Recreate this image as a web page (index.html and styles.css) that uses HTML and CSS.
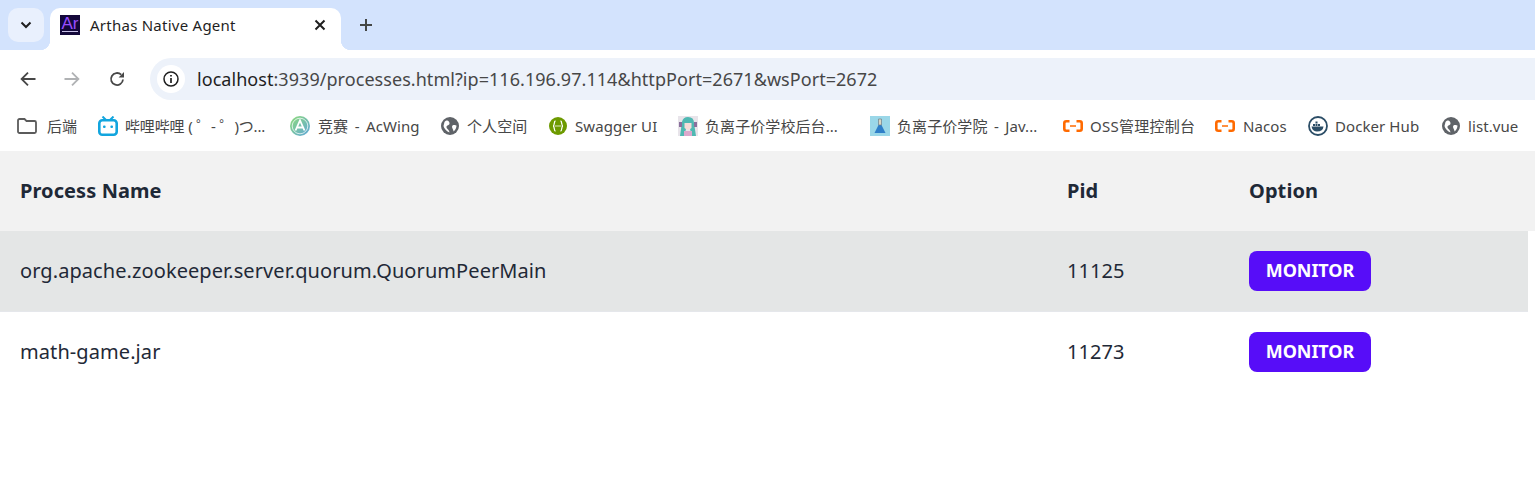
FILE: index.html
```html
<!DOCTYPE html>
<html lang="en">
<head>
<meta charset="utf-8">
<title>Arthas Native Agent</title>
<link rel="stylesheet" href="styles.css">
</head>
<body>
<div class="browser">
  <div class="tabstrip">
    <div class="tab-menu">
      <svg width="12" height="8" viewBox="0 0 12 8"><path d="M1.500 1.500 6 6 10.500 1.500" fill="none" stroke="#1f1f1f" stroke-width="2"/></svg>
    </div>
    <div class="tab">
      <svg class="tab-icon" width="20" height="20" viewBox="0 0 20 20"><rect width="20" height="20" fill="#14083a"/><text x="1.500" y="13.500" class="ar-text">Ar</text><rect x="2" y="16" width="16" height="1" fill="#c8c0e8"/></svg>
      <span class="tab-title">Arthas Native Agent</span>
      <svg class="tab-close" width="12" height="12" viewBox="0 0 12 12"><path d="M1.500 1.500 10.500 10.500M10.500 1.500 1.500 10.500" stroke="#1f1f1f" stroke-width="2"/></svg>
    </div>
    <svg class="new-tab" width="14" height="14" viewBox="0 0 14 14"><path d="M7 1V13M1 7H13" stroke="#444746" stroke-width="2"/></svg>
  </div>
  <div class="toolbar">
    <svg class="nav-btn" width="16" height="16" viewBox="0 0 16 16"><path d="M15.500 8H2M8 1.600 1.600 8 8 14.400" fill="none" stroke="#474747" stroke-width="1.800"/></svg>
    <svg class="nav-btn" width="16" height="16" viewBox="0 0 16 16"><path d="M.5 8H14M8 1.600 14.400 8 8 14.400" fill="none" stroke="#b0b2b4" stroke-width="1.800"/></svg>
    <svg class="nav-btn" width="16" height="16" viewBox="0 0 16 16"><path d="M14 8.500A6 6 0 1 1 12.200 3.700" fill="none" stroke="#474747" stroke-width="1.800"/><path d="M15 1V6.400H9.600Z" fill="#474747"/></svg>
    <div class="omnibox">
      <div class="info-chip">
        <svg width="16" height="16" viewBox="0 0 16 16"><circle cx="8" cy="8" r="7" fill="none" stroke="#1f1f1f" stroke-width="1.500"/><path d="M8 7V12M8 4V5.600" stroke="#1f1f1f" stroke-width="1.700"/></svg>
      </div>
      <span class="url"><span class="host">localhost</span>:3939/processes.html?ip=116.196.97.114&amp;httpPort=2671&amp;wsPort=2672</span>
    </div>
  </div>
  <div class="bookmarks">
    <div class="bm b1"><svg width="20" height="16" viewBox="0 0 20 16"><path d="M1 2.500A1.500 1.500 0 0 1 2.500 1H7.500L9.500 3H17.500A1.500 1.500 0 0 1 19 4.500V13.500A1.500 1.500 0 0 1 17.500 15H2.500A1.500 1.500 0 0 1 1 13.500Z" fill="none" stroke="#5b5b5b" stroke-width="1.800"/></svg><span>后端</span></div>
    <div class="bm b2"><svg width="20" height="20" viewBox="0 0 20 20"><path d="M4.500 .5 8 4M15.500 .5 12 4" stroke="#12a5de" stroke-width="2"/><rect x="1.300" y="4.300" width="17.400" height="14.400" rx="3" fill="#fff" stroke="#12a5de" stroke-width="2.600"/><rect x="5" y="9.500" width="2.600" height="2.600" rx="1" fill="#12a5de"/><rect x="12.400" y="9.500" width="2.600" height="2.600" rx="1" fill="#12a5de"/></svg><span class="t-bili">哔哩哔哩 ( ゜- ゜)つ...</span></div>
    <div class="bm b3"><svg width="20" height="20" viewBox="0 0 20 20"><defs><linearGradient id="acw" x1="0" y1="0" x2="1" y2="1"><stop offset="0" stop-color="#8fdc78"/><stop offset="1" stop-color="#5fa6dc"/></linearGradient></defs><circle cx="10" cy="10" r="10" fill="url(#acw)"/><circle cx="10" cy="10" r="7.800" fill="none" stroke="#fff" stroke-width=".9" opacity=".8"/><path d="M5.500 14.500 10 4.500 14.500 14.500M7 11.500H13" fill="none" stroke="#fff" stroke-width="1.800"/></svg><span class="t-dash">竞赛 - AcWing</span></div>
    <div class="bm b4"><svg width="18" height="18" viewBox="0 0 18 18"><circle cx="9" cy="9" r="9" fill="#5f6368"/><path d="M3.500 5C6 2 8.500 4 8.500 6.500 8.500 8.500 5.500 8 5.500 10 5.500 12 8 12 8.500 15.500 5 14 3 11 2.500 9ZM11.500 8.500C13 7.500 15 8.500 15.500 8.500 15.500 10.500 14.500 13 12.500 14.500 12.500 12 10 10.500 11.500 8.500Z" fill="#fff"/></svg><span>个人空间</span></div>
    <div class="bm b5"><svg width="18" height="18" viewBox="0 0 18 18"><circle cx="9" cy="9" r="9" fill="#6d9a00"/><path d="M6.500 4C4.500 4 6 9 4 9 6 9 4.500 14 6.500 14M11.500 4C13.500 4 12 9 14 9 12 9 13.500 14 11.500 14" fill="none" stroke="#fff" stroke-width="1.300"/><path d="M6.500 9H11.500" stroke="#fff" stroke-width="1.300" stroke-dasharray="1 1"/></svg><span>Swagger UI</span></div>
    <div class="bm b6"><svg width="20" height="20" viewBox="0 0 20 20"><rect width="20" height="20" fill="#e8e4ea"/><path d="M2 20 4 6Q5 1 10 1 16 1 16 7L18 20H14L12 13H8L6 20Z" fill="#4fb8b2"/><path d="M6.500 7H13.500V12Q10 15.500 6.500 12Z" fill="#f6dcd8"/><rect x="1" y="6" width="3" height="5" fill="#8a6f9c"/><rect x="16" y="6" width="3" height="5" fill="#8a6f9c"/><path d="M6 15H14V20H6Z" fill="#dba8cc"/></svg><span>负离子价学校后台...</span></div>
    <div class="bm b7"><svg width="20" height="20" viewBox="0 0 20 20"><rect width="20" height="20" fill="#9ad7e8"/><path d="M8.500 9H11.500L15.500 17H4.500Z" fill="#2f7fc8"/><path d="M8.500 3H11.500V9H8.500Z" fill="#d9d6c4" stroke="#6f7f88" stroke-width=".7"/></svg><span class="t-dash">负离子价学院 - Jav...</span></div>
    <div class="bm b8"><svg width="20" height="12" viewBox="0 0 20 12"><path d="M6.500 1.300H3.300Q1.300 1.300 1.300 3.300V8.700Q1.300 10.700 3.300 10.700H6.500M13.500 1.300H16.700Q18.700 1.300 18.700 3.300V8.700Q18.700 10.700 16.700 10.700H13.500" fill="none" stroke="#ff6a00" stroke-width="2.600"/><path d="M7 6H13" stroke="#ff6a00" stroke-width="1.500"/></svg><span class="t-oss">OSS管理控制台</span></div>
    <div class="bm b9"><svg width="20" height="12" viewBox="0 0 20 12"><path d="M6.500 1.300H3.300Q1.300 1.300 1.300 3.300V8.700Q1.300 10.700 3.300 10.700H6.500M13.500 1.300H16.700Q18.700 1.300 18.700 3.300V8.700Q18.700 10.700 16.700 10.700H13.500" fill="none" stroke="#ff6a00" stroke-width="2.600"/><path d="M7 6H13" stroke="#ff6a00" stroke-width="1.500"/></svg><span>Nacos</span></div>
    <div class="bm b10"><svg width="20" height="20" viewBox="0 0 20 20"><circle cx="10" cy="10" r="9" fill="#fff" stroke="#2b4d66" stroke-width="1.800"/><path d="M3.500 10.500H15.500Q15 15.500 9 15.500 4.500 15.500 3.500 10.500Z" fill="#2b4d66"/><path d="M5 8H7V10H5ZM7.500 8H9.500V10H7.500ZM10 8H12V10H10ZM7.500 5.500H9.500V7.500H7.500Z" fill="#2b4d66"/></svg><span>Docker Hub</span></div>
    <div class="bm b11"><svg width="18" height="18" viewBox="0 0 18 18"><circle cx="9" cy="9" r="9" fill="#5f6368"/><path d="M3.500 5C6 2 8.500 4 8.500 6.500 8.500 8.500 5.500 8 5.500 10 5.500 12 8 12 8.500 15.500 5 14 3 11 2.500 9ZM11.500 8.500C13 7.500 15 8.500 15.500 8.500 15.500 10.500 14.500 13 12.500 14.500 12.500 12 10 10.500 11.500 8.500Z" fill="#fff"/></svg><span>list.vue</span></div>
  </div>
</div>
<table class="proc-table">
  <thead>
    <tr><th class="c-name">Process Name</th><th class="c-pid">Pid</th><th class="c-opt">Option</th></tr>
  </thead>
  <tbody>
    <tr class="active"><td>org.apache.zookeeper.server.quorum.QuorumPeerMain</td><td>11125</td><td><button class="monitor">MONITOR</button></td></tr>
    <tr><td>math-game.jar</td><td>11273</td><td><button class="monitor">MONITOR</button></td></tr>
  </tbody>
</table>
</body>
</html>
```
FILE: styles.css
```css
* { box-sizing: border-box; }
html, body { margin: 0; padding: 0; background: #fff; overflow: hidden; }
body { width: 1535px; height: 477px; font-family: "Noto Sans", "Noto Sans CJK SC", sans-serif; color: #1f2937; }

.tabstrip { height: 50px; background: #d3e3fd; display: flex; align-items: flex-end; padding-left: 8px; }
.tab-menu { width: 36px; height: 34px; margin-bottom: 8px; background: #e9f0fd; border-radius: 10px; display: flex; align-items: center; justify-content: center; }
.tab { position: relative; width: 291px; height: 42px; margin-left: 6px; background: #fff; border-radius: 10px 10px 0 0; display: flex; align-items: center; padding: 0 15px 8px 10px; }
.tab::before, .tab::after { content: ""; position: absolute; bottom: 0; width: 10px; height: 10px; }
.tab::before { left: -10px; background: radial-gradient(circle at 0 0, transparent 10px, #fff 10.5px); }
.tab::after { right: -10px; background: radial-gradient(circle at 100% 0, transparent 10px, #fff 10.5px); }
.tab-icon { flex: none; }
.ar-text { font: 17px "Liberation Sans", sans-serif; fill: #9a4dff; }
.tab-title { flex: 1; margin-left: 10px; font: 15px "Noto Sans", sans-serif; letter-spacing: .25px; color: #1f1f1f; }
.new-tab { margin: 0 0 18px 18px; }

.toolbar { height: 50px; background: #fff; border-radius: 10px 0 0 0; display: flex; align-items: flex-start; padding: 8px 0 0 0; }
.nav-btn { flex: none; margin: 13px 0 0 20px; width: 16px; }
.nav-btn + .nav-btn { margin-left: 28px; }
.nav-btn + .nav-btn + .nav-btn { margin-left: 29px; }
.omnibox { flex: 1; height: 42px; margin-left: 25px; background: #edf2fa; border-radius: 21px 0 0 21px; display: flex; align-items: center; padding-left: 7px; }
.info-chip { width: 28px; height: 28px; border-radius: 50%; background: #fff; display: flex; align-items: center; justify-content: center; }
.url { margin-left: 12px; font-size: 18px; letter-spacing: .05px; color: #474747; white-space: nowrap; }
.host { color: #1f1f1f; }

.bookmarks { height: 51px; display: flex; align-items: center; padding-left: 17px; font-size: 15px; letter-spacing: .08px; color: #474747; white-space: nowrap; }
.bm { display: flex; align-items: center; gap: 8px; flex: none; }
.bm svg { flex: none; }
.b1 { gap: 10px; width: 81px; }
.b2 { gap: 7px; width: 192px; }
.b3 { width: 151px; }
.b4 { width: 108px; }
.b5 { width: 129px; }
.b6 { gap: 7px; width: 192px; }
.b7 { gap: 7px; width: 193px; }
.b8 { gap: 7px; width: 152px; }
.b9 { width: 93px; }
.b10 { gap: 7px; width: 134px; }
.t-bili { letter-spacing: -.15px; }
.t-dash { word-spacing: 2.5px; }
.t-oss { letter-spacing: .25px; }

.proc-table { width: 1528px; border-collapse: separate; border-spacing: 0; table-layout: fixed; font-size: 20px; letter-spacing: .08px; color: #1f2937; }
.proc-table th { height: 80px; padding: 0 20px 2px; text-align: left; background: #f2f2f2; font-weight: 700; }
.proc-table th:last-child { box-shadow: 7px 0 0 #f2f2f2; }
.proc-table td { height: 81px; padding: 0 20px 2px; border-bottom: 1px solid #e5e7eb; }
.proc-table tbody tr:last-child td { height: 80px; border-bottom: 0; }
.c-name { width: 1047px; }
.c-pid { width: 182px; }
.active td { background: #e4e6e6; }
.monitor { display: block; width: 122px; height: 40px; margin-bottom: -2px; padding: 0 0 2px; border: 0; border-radius: 8px; background: #570df8; color: #fff; font: 700 18px "Noto Sans", sans-serif; letter-spacing: -.05px; }
```
